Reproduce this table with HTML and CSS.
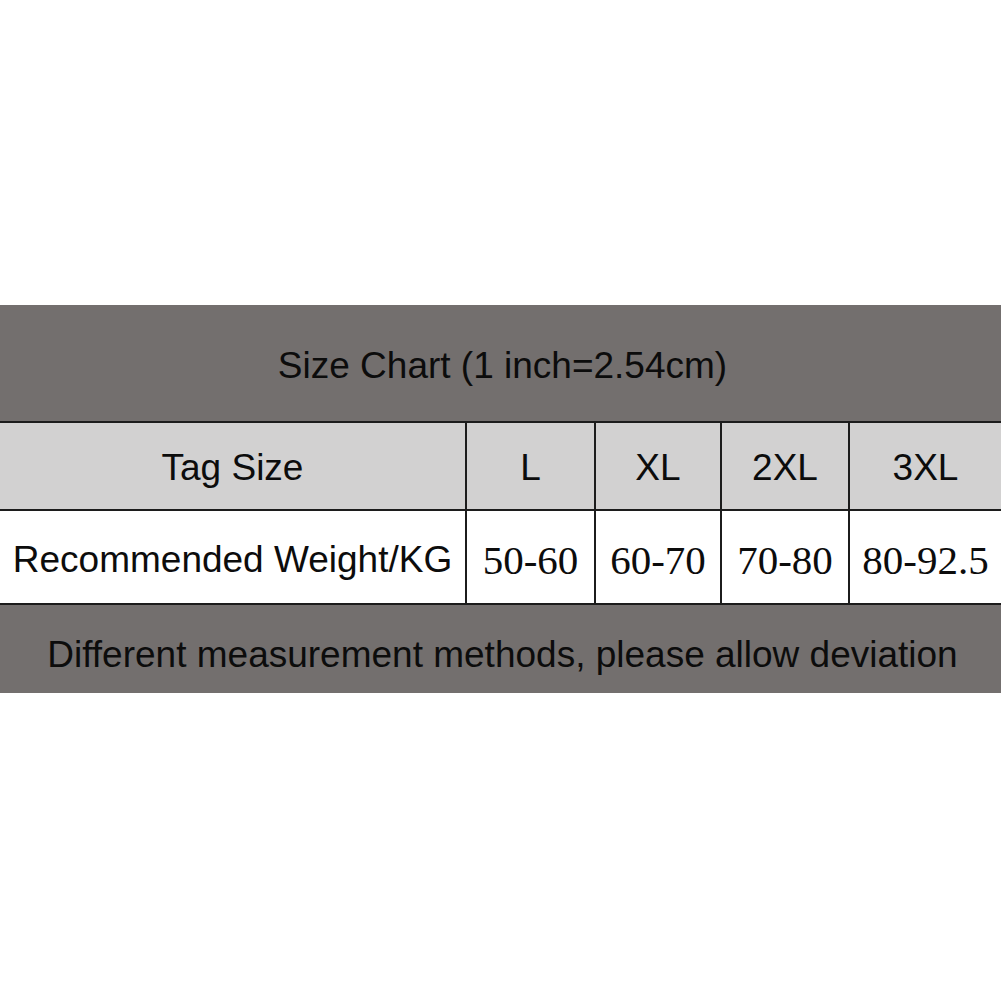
FILE: index.html
```html
<!DOCTYPE html>
<html>
<head>
<meta charset="utf-8">
<link rel="stylesheet" href="styles.css">
</head>
<body>
<div class="chart">
  <div class="band title">Size Chart (1 inch=2.54cm)</div>
  <div class="cell head label">Tag Size</div>
  <div class="cell head">L</div>
  <div class="cell head">XL</div>
  <div class="cell head">2XL</div>
  <div class="cell head">3XL</div>
  <div class="cell data label">Recommended Weight/KG</div>
  <div class="cell data num">50-60</div>
  <div class="cell data num">60-70</div>
  <div class="cell data num">70-80</div>
  <div class="cell data num">80-92.5</div>
  <div class="band foot">Different measurement methods, please allow deviation</div>
</div>
</body>
</html>
```

FILE: styles.css
```css
html, body {
  margin: 0;
  padding: 0;
  background: #ffffff;
}
body {
  font-family: "Liberation Sans", Arial, sans-serif;
  color: #0c0c0c;
}
.chart {
  margin-top: 305px;
  display: grid;
  grid-template-columns: 465px 127px 124px 126px 1fr;
  grid-template-rows: 116px 86px 92px 88px;
  gap: 2px;
  background: #1c1c1c;
}
.band {
  grid-column: 1 / -1;
  background: #736f6e;
  display: flex;
  align-items: center;
  justify-content: center;
  font-size: 37px;
}
.title {
  padding-top: 5px;
  padding-left: 4px;
}
.foot {
  padding-top: 12px;
  padding-left: 4px;
}
.cell {
  display: flex;
  align-items: center;
  justify-content: center;
  font-size: 37px;
}
.head {
  background: #d2d1d1;
  padding-top: 4px;
}
.data {
  background: #ffffff;
  padding-top: 6px;
}
.num {
  font-family: "Liberation Serif", "Times New Roman", serif;
  font-size: 41px;
}
```
